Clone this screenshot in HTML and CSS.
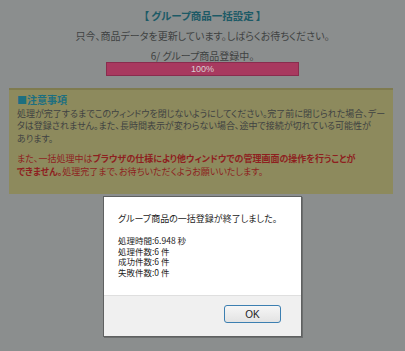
FILE: index.html
```html
<!DOCTYPE html>
<html lang="ja">
<head>
    <meta charset="UTF-8">
    <title>グループ商品一括設定</title>
    <link rel="stylesheet" href="styles.css">
</head>
<body>

    <div class="page">
        <h1 class="title">【 グループ商品一括設定 】</h1>
        <p class="lead">只今、商品データを更新しています。しばらくお待ちください。</p>
        <p class="status">6/ グループ商品登録中。</p>
        <div class="progress">
            <div class="progress-bar">100%</div>
        </div>

        <div class="notice">
            <h2 class="notice-head">■注意事項</h2>
            <p class="notice-text">処理が完了するまでこのウィンドウを閉じないようにしてください。完了前に閉じられた場合、デー<br>タは登録されません。また、長時間表示が変わらない場合、途中で接続が切れている可能性が<br>あります。</p>
            <p class="notice-warn">また、一括処理中は<b>ブラウザの仕様により他ウィンドウでの管理画面の操作を行うことが<br>できません。</b>処理完了まで、お待ちいただくようお願いいたします。</p>
        </div>
    </div>

    <div class="dialog">
        <div class="dialog-body">
            <p class="dialog-msg">グループ商品の一括登録が終了しました。</p>
            <div class="dialog-info">
                <p>処理時間:6.948 秒</p>
                <p>処理件数:6 件</p>
                <p>成功件数:6 件</p>
                <p>失敗件数:0 件</p>
            </div>
        </div>
        <div class="dialog-foot">
            <button class="btn">OK</button>
        </div>
    </div>

</body>
</html>
```

FILE: styles.css
```css
html, body {
    margin: 0;
    padding: 0;
}

body {
    background-color: #8b8e8e;
    font-family: "Noto Sans CJK JP", "Liberation Sans", sans-serif;
    font-feature-settings: "palt";
    font-size: 10px;
    color: #3f4242;
    width: 405px;
    height: 351px;
    overflow: hidden;
}

p, h1, h2 {
    margin: 0;
}

.page {
    padding-top: 9px;
    text-align: center;
}

.title {
    font-size: 10.5px;
    line-height: 14px;
    color: #1c5a66;
}

.lead {
    margin-top: 7px;
    line-height: 12px;
}

.status {
    margin-top: 8px;
    line-height: 12px;
}

.progress {
    width: 193px;
    height: 14px;
    margin: 0 auto;
    box-sizing: border-box;
    border: 1px solid #8a2c4e;
    background-color: #a8395f;
}

.progress-bar {
    height: 12px;
    line-height: 12px;
    font-family: "Liberation Sans", sans-serif;
    font-size: 9px;
    color: #d9cfd2;
}

.notice {
    box-sizing: border-box;
    min-height: 106px;
    margin: 12px 12px 0 9px;
    padding: 4px 8px 16px;
    text-align: left;
    background-color: #8d8a5d;
    border-top: 2px solid #7f7b4f;
    font-size: 9px;
}

.notice-head {
    font-size: 10px;
    line-height: 12px;
    margin-bottom: 1.5px;
    color: #1d6f80;
}

.notice-text {
    line-height: 12.5px;
    white-space: nowrap;
}

.notice-warn {
    margin-top: 8px;
    line-height: 12.5px;
    color: #8e1f1f;
    white-space: nowrap;
}

.dialog {
    position: absolute;
    left: 103px;
    top: 196px;
    width: 197px;
    border: 1px solid #5f6161;
    box-shadow: 1px 1px 0 #6c6e6e;
    background-color: #f0f0f0;
    color: #222;
    font-size: 9px;
}

.dialog-body {
    box-sizing: border-box;
    height: 99px;
    background-color: #fff;
    padding: 16px 14px 0;
    border-bottom: 1px solid #dfdfdf;
}

.dialog-msg {
    line-height: 12px;
    white-space: nowrap;
}

.dialog-info {
    margin-top: 10px;
}

.dialog-info p {
    height: 10.5px;
    line-height: 10.5px;
    font-size: 8.5px;
}

.dialog-foot {
    display: flex;
    justify-content: flex-end;
    padding: 9px 20px 13px;
}

.btn {
    width: 57px;
    height: 18px;
    padding: 0;
    font-family: "Liberation Sans", sans-serif;
    font-size: 10px;
    color: #222;
    border: 1px solid #3c7fb1;
    border-radius: 3px;
    background: linear-gradient(#f6f6f6, #e3e3e3);
}
```
